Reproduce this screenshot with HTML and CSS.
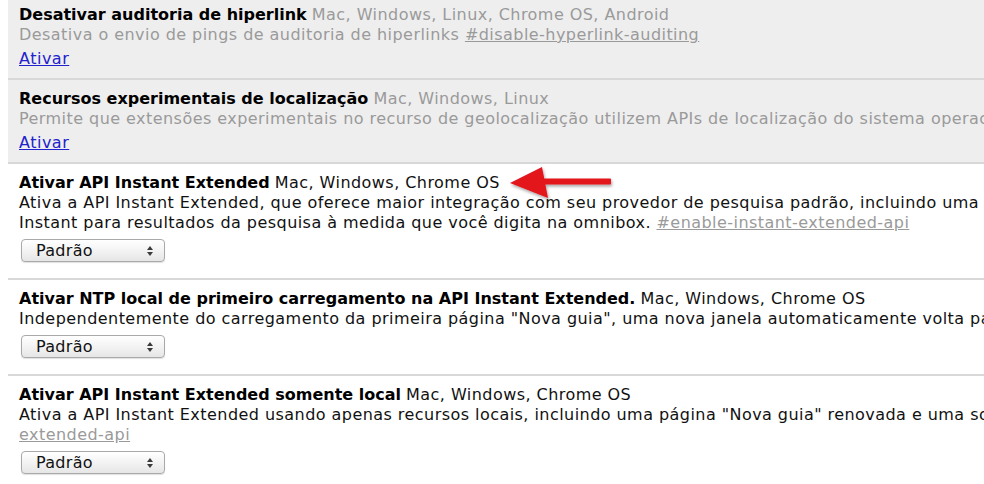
FILE: index.html
```html
<!DOCTYPE html>
<html lang="pt-BR">
<head>
<meta charset="utf-8">
<title>Experimentos</title>
<link rel="stylesheet" href="styles.css">
</head>
<body>
<div class="page">
  <section class="exp off">
    <div class="exp-head"><span class="name">Desativar auditoria de hiperlink</span> <span class="plat">Mac, Windows, Linux, Chrome OS, Android</span></div>
    <div class="exp-desc">Desativa o envio de pings de auditoria de hiperlinks <a class="perm" href="#">#disable-hyperlink-auditing</a></div>
    <a class="act" href="#">Ativar</a>
  </section>
  <section class="exp off">
    <div class="exp-head"><span class="name">Recursos experimentais de localização</span> <span class="plat">Mac, Windows, Linux</span></div>
    <div class="exp-desc">Permite que extensões experimentais no recurso de geolocalização utilizem APIs de localização do sistema operacional</div>
    <a class="act" href="#">Ativar</a>
  </section>
  <section class="exp">
    <div class="exp-head"><span class="name">Ativar API Instant Extended</span> <span class="plat">Mac, Windows, Chrome OS</span></div>
    <div class="exp-desc">Ativa a API Instant Extended, que oferece maior integração com seu provedor de pesquisa padrão, incluindo uma</div>
    <div class="exp-desc">Instant para resultados da pesquisa à medida que você digita na omnibox. <a class="perm" href="#">#enable-instant-extended-api</a></div>
    <div class="exp-select"><span>Padrão</span><svg class="updown" width="8" height="12" viewBox="0 0 8 12"><path d="M4 1 L7 5 L1 5 Z M4 11 L7 7 L1 7 Z" fill="#3a3a3a"/></svg></div>
  </section>
  <section class="exp">
    <div class="exp-head"><span class="name">Ativar NTP local de primeiro carregamento na API Instant Extended.</span> <span class="plat">Mac, Windows, Chrome OS</span></div>
    <div class="exp-desc">Independentemente do carregamento da primeira página "Nova guia", uma nova janela automaticamente volta para</div>
    <div class="exp-select"><span>Padrão</span><svg class="updown" width="8" height="12" viewBox="0 0 8 12"><path d="M4 1 L7 5 L1 5 Z M4 11 L7 7 L1 7 Z" fill="#3a3a3a"/></svg></div>
  </section>
  <section class="exp">
    <div class="exp-head"><span class="name">Ativar API Instant Extended somente local</span> <span class="plat">Mac, Windows, Chrome OS</span></div>
    <div class="exp-desc">Ativa a API Instant Extended usando apenas recursos locais, incluindo uma página "Nova guia" renovada e uma sobreposição</div>
    <div class="exp-desc"><a class="perm" href="#">extended-api</a></div>
    <div class="exp-select"><span>Padrão</span><svg class="updown" width="8" height="12" viewBox="0 0 8 12"><path d="M4 1 L7 5 L1 5 Z M4 11 L7 7 L1 7 Z" fill="#3a3a3a"/></svg></div>
  </section>
</div>
<svg class="pointer" width="130" height="50" viewBox="0 0 130 50">
  <defs>
    <filter id="sh" x="-20%" y="-40%" width="140%" height="180%">
      <feDropShadow dx="1" dy="2" stdDeviation="1.5" flood-color="#000" flood-opacity="0.35"/>
    </filter>
  </defs>
  <g filter="url(#sh)" fill="#e3141b">
    <path d="M10 23 L42 7 L48 38 Z"/>
    <rect x="38" y="18.5" width="73" height="6" rx="1"/>
  </g>
</svg>
</body>
</html>
```
FILE: styles.css
```css
html, body {
  margin: 0;
  padding: 0;
  overflow: hidden;
  background: #fff;
}
body {
  position: relative;
  font-family: "DejaVu Sans", "Verdana", sans-serif;
  font-size: 16px;
  line-height: 20px;
  color: #111;
}
.page {
  margin: -4px 0 0 8px;
  width: 1600px;
}
.exp {
  padding: 9px 11px;
  border-bottom: 2px solid #d8d8d8;
  background: #fff;
}
.exp.off {
  background: #eeeeee;
  color: #9a9a9a;
}
.exp-head,
.exp-desc {
  white-space: nowrap;
}
.name {
  font-weight: bold;
  color: #000;
}
.plat,
.exp-desc {
  letter-spacing: 0.45px;
}
.perm {
  color: #9a9a9a;
  text-decoration: underline;
}
.act {
  display: inline-block;
  margin-top: 4px;
  color: #2222cc;
  letter-spacing: 0.5px;
  text-decoration: underline;
}
.exp-select {
  display: flex;
  align-items: center;
  justify-content: space-between;
  box-sizing: border-box;
  width: 144px;
  height: 23px;
  margin: 6px 0 7px 2px;
  padding: 0 10px 0 14px;
  border: 1px solid #a9a9a9;
  border-radius: 4px;
  background: linear-gradient(#ffffff, #f3f3f3 50%, #e6e6e6);
  box-shadow: 0 1px 1px rgba(0,0,0,0.12);
  color: #111;
  letter-spacing: 0.3px;
}
.updown {
  display: block;
}
.pointer {
  position: absolute;
  left: 500px;
  top: 160px;
}
```
